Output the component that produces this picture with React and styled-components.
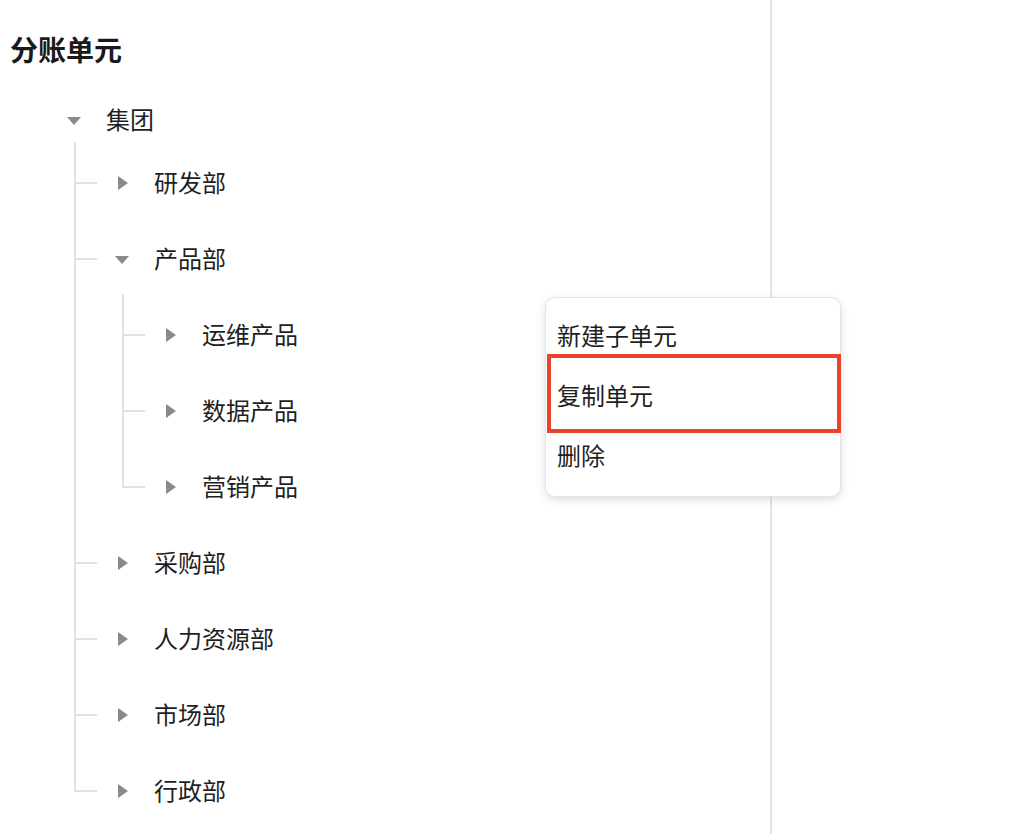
import React from "react";
import styled, { createGlobalStyle } from "styled-components";

const GlobalStyle = createGlobalStyle`
  html, body, #root { margin: 0; padding: 0; height: 100%; }
  body {
    background: #ffffff;
    font-family: "Noto Sans CJK SC", "Noto Sans", sans-serif;
    color: #1f1f1f;
  }
  * { box-sizing: border-box; }
`;

const Page = styled.div`
  display: flex;
  height: 834px;
  overflow: hidden;
  position: relative;
`;

const LeftPanel = styled.div`
  width: 772px;
  flex: none;
  border-right: 2px solid #e2e2ea;
  padding: 31px 0 0 10px;
`;

const RightPanel = styled.div`
  flex: 1;
`;

const Title = styled.h1`
  margin: 0;
  font-size: 28px;
  line-height: 36px;
  font-weight: 700;
  color: #1a1a1a;
`;

const Tree = styled.ul`
  list-style: none;
  margin: 33px 0 0 -10px;
  padding: 0;
`;

const Children = styled.ul`
  list-style: none;
  margin: 0;
  padding: 0;
`;

const Item = styled.li`
  position: relative;
  padding-top: ${(p) => p.$gap}px;

  ${(p) =>
    p.$level > 0 &&
    `
    &::before {
      content: "";
      position: absolute;
      left: ${74 + 48 * (p.$level - 1)}px;
      width: 2px;
      background: #e0e0e6;
      top: ${p.$first ? p.$gap - 21 : 0}px;
      ${p.$last ? `height: ${p.$gap + 20 - (p.$first ? p.$gap - 21 : 0)}px;` : "bottom: 0;"}
    }
    &::after {
      content: "";
      position: absolute;
      left: ${74 + 48 * (p.$level - 1)}px;
      top: ${p.$gap + 19}px;
      width: 23px;
      height: 2px;
      background: #e0e0e6;
    }
  `}
`;

const Row = styled.div`
  display: flex;
  align-items: center;
  height: 40px;
  padding-left: ${(p) => 62 + 48 * p.$level}px;
`;

const Toggle = styled.span`
  width: 24px;
  height: 24px;
  display: flex;
  align-items: center;
  justify-content: center;
  flex: none;
`;

const Label = styled.span`
  margin-left: 20px;
  margin-bottom: 2px;
  font-size: 24px;
  line-height: 38px;
  color: #1f1f1f;
  white-space: nowrap;
`;

const Caret = ({ open }) =>
  open ? (
    <svg width="14" height="8" viewBox="0 0 14 8" style={{ marginTop: 2 }}>
      <path d="M0 0 L14 0 L7 8 Z" fill="#8a8a8e" />
    </svg>
  ) : (
    <svg width="10" height="14" viewBox="0 0 10 14" style={{ marginLeft: 2 }}>
      <path d="M0 0 L10 7 L0 14 Z" fill="#8a8a8e" />
    </svg>
  );

const Menu = styled.div`
  position: absolute;
  left: 545px;
  top: 297px;
  width: 296px;
  height: 200px;
  background: #ffffff;
  border: 1px solid #e4e4e8;
  border-radius: 10px;
  box-shadow: 0 3px 10px rgba(0, 0, 0, 0.13);
  padding: 6px 0 10px;
`;

const MenuItem = styled.div`
  height: 60px;
  display: flex;
  align-items: center;
  padding-left: 11px;
  font-size: 24px;
  color: #1f1f1f;
`;

const Highlight = styled.div`
  position: absolute;
  left: 1px;
  right: -1px;
  top: 56px;
  height: 79px;
  border: 4px solid #e8432b;
  pointer-events: none;
`;

const data = {
  label: "集团",
  open: true,
  children: [
    { label: "研发部" },
    {
      label: "产品部",
      open: true,
      children: [{ label: "运维产品" }, { label: "数据产品" }, { label: "营销产品" }],
    },
    { label: "采购部" },
    { label: "人力资源部" },
    { label: "市场部" },
    { label: "行政部" },
  ],
};

function Node({ node, level, gap, first, last }) {
  const childGap = level === 0 ? 23 : 36;
  return (
    <Item $level={level} $gap={gap} $first={first} $last={last}>
      <Row $level={level}>
        <Toggle>
          <Caret open={!!node.open} />
        </Toggle>
        <Label>{node.label}</Label>
      </Row>
      {node.open && node.children && (
        <Children>
          {node.children.map((c, i) => (
            <Node
              key={c.label}
              node={c}
              level={level + 1}
              gap={i === 0 ? childGap : 36}
              first={i === 0}
              last={i === node.children.length - 1}
            />
          ))}
        </Children>
      )}
    </Item>
  );
}

export default function App() {
  return (
    <>
      <GlobalStyle />
      <Page>
        <LeftPanel>
          <Title>分账单元</Title>
          <Tree>
            <Node node={data} level={0} gap={0} first last />
          </Tree>
        </LeftPanel>
        <RightPanel />
        <Menu>
          <MenuItem>新建子单元</MenuItem>
          <MenuItem>复制单元</MenuItem>
          <MenuItem>删除</MenuItem>
          <Highlight />
        </Menu>
      </Page>
    </>
  );
}
